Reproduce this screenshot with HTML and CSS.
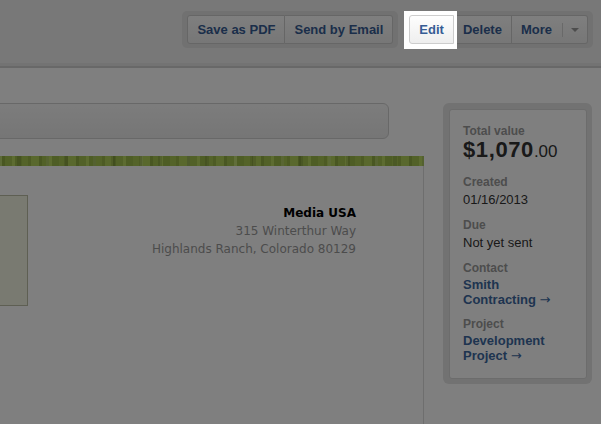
FILE: index.html
```html
<!DOCTYPE html>
<html lang="en">
<head>
    <meta charset="UTF-8">
    <title>Estimate</title>
    <link rel="stylesheet" href="styles.css">
</head>
<body>
    <header class="topbar">
        <div class="btn-frame">
            <button class="btn btn--first">Save as PDF</button>
            <button class="btn btn--last">Send by Email</button>
        </div>
        <div class="btn-frame">
            <div class="spotlight">
                <button class="btn btn--first">Edit</button>
            </div>
            <button class="btn">Delete</button>
            <button class="btn btn--last btn--split">
                <span>More</span>
                <span class="caret-part"><span class="caret"></span></span>
            </button>
        </div>
    </header>

    <div class="layout">
        <div class="main">
            <div class="searchbar"></div>
            <div class="paper">
                <div class="stripe"></div>
                <div class="paper-body">
                    <div class="logo-box"></div>
                    <div class="address">
                        <strong>Media USA</strong><br>
                        315 Winterthur Way<br>
                        Highlands Ranch, Colorado 80129
                    </div>
                </div>
            </div>
        </div>

        <aside class="sidebar">
            <div class="summary">
                <div class="item">
                    <div class="label">Total value</div>
                    <div class="value value--total">$1,070<span class="cents">.00</span></div>
                </div>
                <div class="item">
                    <div class="label">Created</div>
                    <div class="value">01/16/2013</div>
                </div>
                <div class="item">
                    <div class="label">Due</div>
                    <div class="value">Not yet sent</div>
                </div>
                <div class="item">
                    <div class="label">Contact</div>
                    <div class="value value--link"><a href="#">Smith <span class="nowrap">Contracting <span class="arrow">→</span></span></a></div>
                </div>
                <div class="item">
                    <div class="label">Project</div>
                    <div class="value value--link"><a href="#">Development <span class="nowrap">Project <span class="arrow">→</span></span></a></div>
                </div>
            </div>
        </aside>
    </div>

    <!-- dim everything except the highlighted button -->
    <div class="overlay"></div>
</body>
</html>
```

FILE: styles.css
```css
body {
    margin: 0;
    font-family: "Liberation Sans", Arial, sans-serif;
    background-color: #fff;
    color: #333;
    overflow: hidden;
}
.topbar {
    height: 68px;
    box-sizing: border-box;
    display: flex;
    justify-content: flex-end;
    align-items: flex-start;
    gap: 6px;
    padding: 11px 8px 0 0;
    background: linear-gradient(#f0f0f0 63px, #e6e6e6 63px);
    border-bottom: 2px solid #d0d0d0;
}
.btn-frame {
    display: flex;
    padding: 4px 5px;
    background-color: #e2e2e2;
    border-radius: 5px;
}
.btn {
    display: flex;
    align-items: center;
    height: 29px;
    box-sizing: border-box;
    padding: 0 9px;
    margin: 0;
    font: bold 13px "Liberation Sans", Arial, sans-serif;
    color: #365c94;
    background: linear-gradient(#fefefe, #eeeeee);
    border: 1px solid #cdcdcd;
    border-left-width: 0;
    border-radius: 0;
}
.btn--first {
    border-left-width: 1px;
    border-radius: 3px 0 0 3px;
}
.btn--last {
    border-radius: 0 3px 3px 0;
}
.btn--split {
    padding-right: 0;
}
.caret-part {
    display: flex;
    align-items: center;
    height: 14px;
    margin-left: 10px;
    padding: 0 8px;
    border-left: 1px solid #d2d2d2;
}
.caret {
    width: 0;
    height: 0;
    border-left: 4px solid transparent;
    border-right: 4px solid transparent;
    border-top: 4px solid #9a9a9a;
}
.spotlight {
    position: relative;
    z-index: 11;
    display: flex;
    background-color: #fff;
    padding: 4px 3px 5px 5px;
    margin: -4px -3px -5px -5px;
}
.overlay {
    position: fixed;
    inset: 0;
    z-index: 10;
    background-color: rgba(0, 0, 0, 0.5);
}
.layout {
    display: flex;
    align-items: flex-start;
    gap: 19px;
    margin-left: -200px;
    padding-top: 35px;
}
.main {
    flex: none;
    width: 624px;
}
.searchbar {
    height: 36px;
    box-sizing: border-box;
    margin-right: 35px;
    border: 1px solid #d0d0d0;
    border-radius: 6px;
    background: linear-gradient(#f9f9f9, #ececec);
}
.paper {
    margin-top: 17px;
    height: 320px;
    border: 1px solid #dcdcdc;
    border-top: 0;
}
.stripe {
    height: 10px;
    margin: 0 -1px;
    background:
        repeating-linear-gradient(90deg, rgba(255, 255, 255, 0) 0 11px, rgba(255, 255, 255, 0.12) 11px 14px, rgba(0, 0, 0, 0) 14px 29px, rgba(0, 0, 0, 0.1) 29px 33px, rgba(255, 255, 255, 0) 33px 47px),
        repeating-linear-gradient(90deg, #a8c652 0 6px, #9ab648 6px 9px, #b2d05a 9px 17px, #92ae44 17px 20px, #a4c250 20px 27px, #bad862 27px 30px, #9cba4a 30px 37px);
}
.paper-body {
    display: flex;
    justify-content: space-between;
    align-items: flex-start;
    padding: 29px 67px 0 30px;
}
.logo-box {
    width: 197px;
    height: 111px;
    box-sizing: border-box;
    border: 1px solid #bcbfa6;
    background-color: #f2f4e2;
}
.address {
    margin-top: 9px;
    text-align: right;
    font: 12px/18px "DejaVu Sans", Verdana, sans-serif;
    color: #999;
}
.address strong {
    color: #000;
}
.sidebar {
    flex: none;
    width: 149px;
    box-sizing: border-box;
    padding: 6px 5px 5px 6px;
    background-color: #e4e4e4;
    border-radius: 6px;
}
.summary {
    padding: 13px 13px 15px;
    background-color: #fff;
    border: 1px solid #d8d8d8;
    border-radius: 3px;
}
.item + .item {
    margin-top: 9px;
}
.label {
    font-size: 12px;
    line-height: 16px;
    font-weight: bold;
    color: #9a9a9a;
}
.value {
    margin-top: 1px;
    font-size: 13px;
    line-height: 17px;
    color: #333;
}
.value--total {
    font-size: 22px;
    line-height: 20px;
    font-weight: bold;
    letter-spacing: 0.6px;
    padding-bottom: 5px;
}
.cents {
    font-size: 17px;
    line-height: 0;
    font-weight: normal;
    letter-spacing: 0;
}
.value--link {
    line-height: 15px;
    font-weight: bold;
}
.value--link a {
    color: #3c68a0;
    text-decoration: none;
}
.nowrap {
    white-space: nowrap;
}
.arrow {
    font-family: "DejaVu Sans", sans-serif;
    font-weight: normal;
}
```
